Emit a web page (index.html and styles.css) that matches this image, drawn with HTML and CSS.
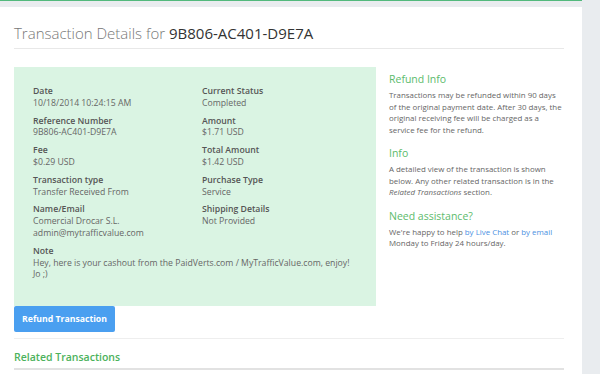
FILE: index.html
```html
<!DOCTYPE html>
<html lang="en">
<head>
    <meta charset="UTF-8">
    <meta name="viewport" content="width=device-width, initial-scale=1.0">
    <title>Transaction Details</title>
    <link rel="stylesheet" href="styles.css">
</head>
<body>
    <div class="topline"></div>
    <div class="page">
        <div class="panel">
            <h1 class="title">Transaction Details for <span class="title-id">9B806-AC401-D9E7A</span></h1>
            <hr class="rule">

            <div class="layout">
                <div class="main">
                    <div class="details">
                        <div class="detail-col">
                            <div class="field">
                                <div class="field-label">Date</div>
                                <div class="field-value">10/18/2014 10:24:15 AM</div>
                            </div>
                            <div class="field">
                                <div class="field-label">Reference Number</div>
                                <div class="field-value">9B806-AC401-D9E7A</div>
                            </div>
                            <div class="field">
                                <div class="field-label">Fee</div>
                                <div class="field-value">$0.29 USD</div>
                            </div>
                            <div class="field">
                                <div class="field-label">Transaction type</div>
                                <div class="field-value">Transfer Received From</div>
                            </div>
                            <div class="field">
                                <div class="field-label">Name/Email</div>
                                <div class="field-value">Comercial Drocar S.L.<br>admin@mytrafficvalue.com</div>
                            </div>
                        </div>
                        <div class="detail-col">
                            <div class="field">
                                <div class="field-label">Current Status</div>
                                <div class="field-value">Completed</div>
                            </div>
                            <div class="field">
                                <div class="field-label">Amount</div>
                                <div class="field-value">$1.71 USD</div>
                            </div>
                            <div class="field">
                                <div class="field-label">Total Amount</div>
                                <div class="field-value">$1.42 USD</div>
                            </div>
                            <div class="field">
                                <div class="field-label">Purchase Type</div>
                                <div class="field-value">Service</div>
                            </div>
                            <div class="field">
                                <div class="field-label">Shipping Details</div>
                                <div class="field-value">Not Provided</div>
                            </div>
                        </div>
                        <div class="field field-wide">
                            <div class="field-label">Note</div>
                            <div class="field-value">Hey, here is your cashout from the PaidVerts.com / MyTrafficValue.com, enjoy! Jo ;)</div>
                        </div>
                    </div>
                    <button class="btn-refund" type="button">Refund Transaction</button>
                </div>

                <div class="side">
                    <h3 class="side-title">Refund Info</h3>
                    <p class="side-text">Transactions may be refunded within 90 days of the original payment date. After 30 days, the original receiving fee will be charged as a service fee for the refund.</p>

                    <h3 class="side-title">Info</h3>
                    <p class="side-text">A detailed view of the transaction is shown below. Any other related transaction is in the <em>Related Transactions</em> section.</p>

                    <h3 class="side-title">Need assistance?</h3>
                    <p class="side-text">We're happy to help <a href="#">by Live Chat</a> or <a href="#">by email</a> Monday to Friday 24 hours/day.</p>
                </div>
            </div>

            <hr class="rule rule-section">
            <h2 class="section-title">Related Transactions</h2>
            <hr class="rule rule-thick">
        </div>
    </div>
</body>
</html>
```

FILE: styles.css
```css
/* Base */
body {
    margin: 0;
    background: #e9ecef;
    font-family: "Open Sans", "Liberation Sans", sans-serif;
    color: #555;
    overflow: hidden;
}

.topline {
    height: 1px;
    width: 582px;
    background: #52b97c;
}

.page {
    padding-top: 6px;
    width: 582px;
}

.panel {
    background: white;
    padding: 16px 18px 10px 14px;
    min-height: 400px;
}

/* Heading */
.title {
    margin: 0;
    font-size: 15px;
    line-height: 20px;
    font-weight: 300;
    color: #777;
}

.title-id {
    font-weight: 400;
    color: #333;
}

.rule {
    border: none;
    border-top: 1px solid #e8e8e8;
    margin: 5px 0 18px;
}

.rule-section {
    margin: 6px 0 0;
    border-top-color: #eeeeee;
}

.rule-thick {
    margin: 4px 0 0;
    border-top: 2px solid #e2e2e2;
}

/* Layout */
.layout {
    display: grid;
    grid-template-columns: 362px 1fr;
    gap: 13px;
}

.details {
    background: #daf4e3;
    padding: 19px 19px 19px;
    display: grid;
    grid-template-columns: 169px 1fr;
}

.field {
    margin-bottom: 6px;
}

.field-wide {
    grid-column: 1 / -1;
}

.field-label {
    font-size: 8.7px;
    line-height: 11.8px;
    font-weight: 600;
    color: #555;
}

.field-value {
    font-size: 8.7px;
    line-height: 11.8px;
    color: #666;
}

.btn-refund {
    display: block;
    background: #4a9ff0;
    color: white;
    border: none;
    border-radius: 2px;
    width: 101px;
    height: 26px;
    padding: 0;
    font-family: inherit;
    font-size: 8.7px;
    font-weight: 700;
    cursor: pointer;
}

/* Sidebar */
.side {
    padding-top: 5px;
}

.side-title {
    margin: 0 0 4px;
    font-size: 10.5px;
    line-height: 14px;
    font-weight: 400;
    color: #5cbb6c;
}

.side-text {
    margin: 0 0 10px;
    font-size: 7.9px;
    line-height: 11.5px;
    color: #666;
}

.side-text a {
    color: #4a90e2;
    text-decoration: none;
}

.section-title {
    margin: 11px 0 0;
    font-size: 10.5px;
    line-height: 14px;
    font-weight: 600;
    color: #4cb25c;
}
```
